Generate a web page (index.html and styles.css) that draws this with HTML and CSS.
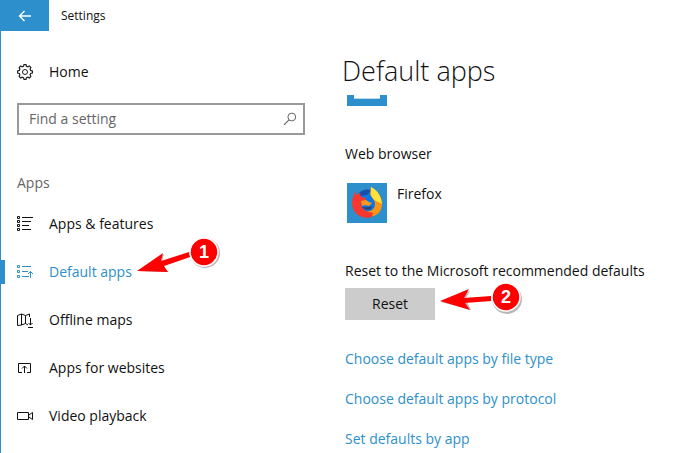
FILE: index.html
```html
<!DOCTYPE html>
<html lang="en">
<head>
<meta charset="utf-8">
<title>Settings</title>
<link rel="stylesheet" href="styles.css">
</head>
<body>
<div class="window">
  <header class="titlebar">
    <button class="back" type="button" aria-label="Back">
      <svg width="14" height="12" viewBox="0 0 14 12"><path d="M13 6H1.500M6.500 1L1.500 6l5 5" fill="none" stroke="#fff" stroke-width="1.400"/></svg>
    </button>
    <span class="window-name">Settings</span>
  </header>
  <div class="columns">
    <aside class="sidebar">
      <a class="nav-link home" href="#">
        <svg class="icon" viewBox="0 0 16 16" fill="none" stroke="#222"><path stroke-width="1.200" d="M6.500 2.200L7 .6h2l.5 1.600 1.300.6 1.600-.8 1.500 1.500-.8 1.600.6 1.300 1.700.6v2l-1.700.5-.6 1.300.8 1.600-1.500 1.500-1.600-.8-1.300.6L9 15.400H7l-.5-1.700-1.300-.6-1.600.8-1.500-1.500.8-1.600-.6-1.300L.6 9V7l1.700-.6.6-1.300-.8-1.600L3.600 2l1.600.8z"/><circle cx="8" cy="8" r="2.500"/></svg>
        <span>Home</span>
      </a>
      <form class="search">
        <input class="search-input" type="search" placeholder="Find a setting" aria-label="Find a setting">
        <svg class="search-icon" width="14" height="14" viewBox="0 0 14 14"><circle cx="8.800" cy="5" r="3.900" fill="none" stroke="#666"/><path d="M6 7.800L1 12.800" stroke="#666" stroke-width="1.200"/></svg>
      </form>
      <h2 class="group">Apps</h2>
      <nav class="nav">
        <a class="nav-link" href="#">
          <svg class="icon" viewBox="0 0 16 16" fill="none" stroke="currentColor"><path d="M.5.5h2v2h-2zM.5 4.500h2v2h-2zM.5 8.500h2v2h-2zM.5 12.500h2v2h-2zM5 1.500h11M5 5.500h9M5 9.500h7M5 13.500h9"/></svg>
          <span>Apps &amp; features</span>
        </a>
        <a class="nav-link current" href="#" aria-current="page">
          <svg class="icon" viewBox="0 0 16 16" fill="none" stroke="currentColor"><path d="M.5 1.500h2v2h-2zM.5 6.500h2v2h-2zM.5 11.500h2v2h-2zM5 2.500h9M5 7.500h6M5 12.500h7M13.500 14V7.500M11 10l2.500-2.500L16 10"/></svg>
          <span>Default apps</span>
          <svg class="callout callout-one" width="86" height="44" viewBox="0 0 86 44">
            <g class="callout-shadow"><path d="M2 35L28 18l-2 7 27-8 1 4-27 9 5 6z"/><circle cx="69" cy="17" r="15"/></g>
            <path d="M1 35L27 17l-2 8 28-9 1 5-26 9 4 6z" fill="#f00"/>
            <circle cx="68" cy="16" r="14" fill="#f00" stroke="#fff" stroke-width="1.500"/>
            <text class="callout-text" x="68" y="22">1</text>
          </svg>
        </a>
        <a class="nav-link" href="#">
          <svg class="icon" viewBox="0 0 16 16" fill="none" stroke="currentColor"><path d="M11 13L8.500 11.500l-4 1.500-4 .5V3.500l4-1.500 4 1.500 4-1.500v3M4.500 2v11M8.500 3.500v8M12.500 2v3M13.500 6v7M11.500 11l2 2 2-2M11 15.500h5"/></svg>
          <span>Offline maps</span>
        </a>
        <a class="nav-link" href="#">
          <svg class="icon" viewBox="0 0 16 16" fill="none" stroke="currentColor"><path d="M5 12.500H1.500v-9h12v9H10M7.500 13V6M5 8.500L7.500 6 10 8.500"/></svg>
          <span>Apps for websites</span>
        </a>
        <a class="nav-link" href="#">
          <svg class="icon" viewBox="0 0 16 16" fill="none" stroke="currentColor"><path d="M.5 4.500h11v7H.5zM12 7l3.500-2.500v7L12 9"/></svg>
          <span>Video playback</span>
        </a>
      </nav>
    </aside>
    <main class="content">
      <h1 class="title">Default apps</h1>
      <svg class="previous-app" width="40" height="11" viewBox="0 0 40 11"><path d="M0 0h7v4h26V0h7v11H0z" fill="#2d8fcb"/><path d="M7 3h26v1H7z" fill="#b7d9ee"/></svg>
      <h2 class="label browser-label">Web browser</h2>
      <button class="app" type="button">
        <svg class="app-tile" width="40" height="40" viewBox="0 0 40 40">
          <path d="M0 0h40v40H0z" fill="#2d8fcb"/>
          <circle cx="20" cy="20" r="13" fill="#0878e8"/>
          <path d="M12 10q5-5 12-3l-4 5-7 1z" fill="#1650a8"/>
          <path d="M24 4c6 4 11 9 11 17 0 8-6 13-14 13-6 0-10-4-10-9 7 6 17 4 17-4 0-5-4-6-5-10z" fill="#ff9514"/>
          <path d="M9 8v4l4-2 1 4 5 1-1 3-4 2 1 4c2 4 7 5 11 6l-1 4c-11 3-20-4-20-14 0-5 2-9 4-12z" fill="#f8372f"/>
          <path d="M24 4c6 3 10 8 11 17-4-3-9-3-11-9z" fill="#ffe13c"/>
          <path d="M14 18l5-1 3 2 3 1-3 3-4-1-3 1z" fill="#ff981c"/>
          <path d="M15 24q5 1 10-1l-1 3q-4 2-8-1z" fill="#34436b"/>
        </svg>
        <span class="app-name">Firefox</span>
      </button>
      <h2 class="label">Reset to the Microsoft recommended defaults</h2>
      <div class="reset-row">
        <button class="reset" type="button">Reset</button>
        <svg class="callout callout-two" width="86" height="34" viewBox="0 0 86 34">
          <g class="callout-shadow"><path d="M2 20L31 9l-4 7 24-1v4l-23 1 4 8z"/><circle cx="68" cy="17" r="15"/></g>
          <path d="M1 19L30 7l-5 9 27-2v5l-26 2 5 7z" fill="#f00"/>
          <circle cx="67" cy="15" r="14" fill="#f00" stroke="#fff" stroke-width="1.500"/>
          <text class="callout-text" x="67" y="21">2</text>
        </svg>
      </div>
      <ul class="links">
        <li><a href="#">Choose default apps by file type</a></li>
        <li><a href="#">Choose default apps by protocol</a></li>
        <li><a href="#">Set defaults by app</a></li>
      </ul>
    </main>
  </div>
</div>
</body>
</html>
```
FILE: styles.css
```css
* { box-sizing: border-box; }

body {
  margin: 0;
  background: #fff;
  color: #111;
  font: 14px/20px "Open Sans", "Noto Sans", sans-serif;
}

button, input { font: inherit; color: inherit; }
a { color: inherit; text-decoration: none; }
h1, h2, ul { margin: 0; padding: 0; font-weight: 400; }
svg { display: block; flex: none; }

.window {
  display: flex;
  flex-direction: column;
  min-height: 100vh;
}

.titlebar {
  display: flex;
  align-items: center;
  gap: 12px;
  height: 31px;
}
.back {
  display: grid;
  place-items: center;
  width: 49px;
  height: 31px;
  padding: 0;
  border: 0;
  background: #2d8fcb;
}
.window-name { font-size: 12px; }

.columns {
  display: flex;
  flex: 1;
  border-left: 1px solid #2d8fcb;
}

.sidebar {
  flex: none;
  width: 304px;
  padding-top: 17px;
}
.nav-link {
  position: relative;
  display: flex;
  align-items: center;
  gap: 16px;
  height: 48px;
  padding-left: 16px;
}
.home { margin-bottom: 7px; }
.icon { width: 16px; height: 16px; }
.current { color: #2d8fcb; }
.current::before {
  content: "";
  position: absolute;
  left: 0;
  width: 4px;
  height: 24px;
  background: #2d8fcb;
}

.search {
  display: flex;
  align-items: center;
  height: 32px;
  margin-left: 16px;
  padding: 0 6px 0 10px;
  border: 2px solid #999;
}
.search-input {
  flex: 1;
  min-width: 0;
  padding: 0;
  border: 0;
  outline: 0;
  background: none;
}
.search-input::placeholder { color: #666; opacity: 1; }

.group {
  margin: 38px 0 7px 16px;
  color: #666;
  font-size: 14px;
  line-height: 20px;
}

.content {
  flex: 1;
  padding: 24px 0 0 40px;
}
.title {
  font-size: 27px;
  font-weight: 300;
  line-height: 32px;
  margin-left: -3px;
}
.previous-app { margin: 8px 0 0 2px; }
.label {
  font-size: 14px;
  line-height: 20px;
}
.browser-label { margin-top: 38px; }
.app {
  display: flex;
  gap: 10px;
  margin: 19px 0 38px 2px;
  padding: 0;
  border: 0;
  background: none;
}
.app-name { line-height: 22px; }

.reset-row {
  position: relative;
  margin-top: 7px;
}
.reset {
  display: block;
  width: 90px;
  height: 32px;
  padding: 0;
  border: 0;
  background: #ccc;
}

.links {
  display: flex;
  flex-direction: column;
  gap: 20px;
  margin-top: 29px;
  list-style: none;
  color: #2d8fcb;
}

/* Numbered pointers laid over the page */
.callout {
  position: absolute;
  z-index: 1;
  overflow: visible;
}
.callout-one { left: 135px; top: -12px; }
.callout-two { left: 94px; top: -6px; }
.callout-shadow { fill: #999; opacity: 0.7; }
.callout-text {
  fill: #fff;
  font: 700 18px "Liberation Sans", sans-serif;
  text-anchor: middle;
}
```
